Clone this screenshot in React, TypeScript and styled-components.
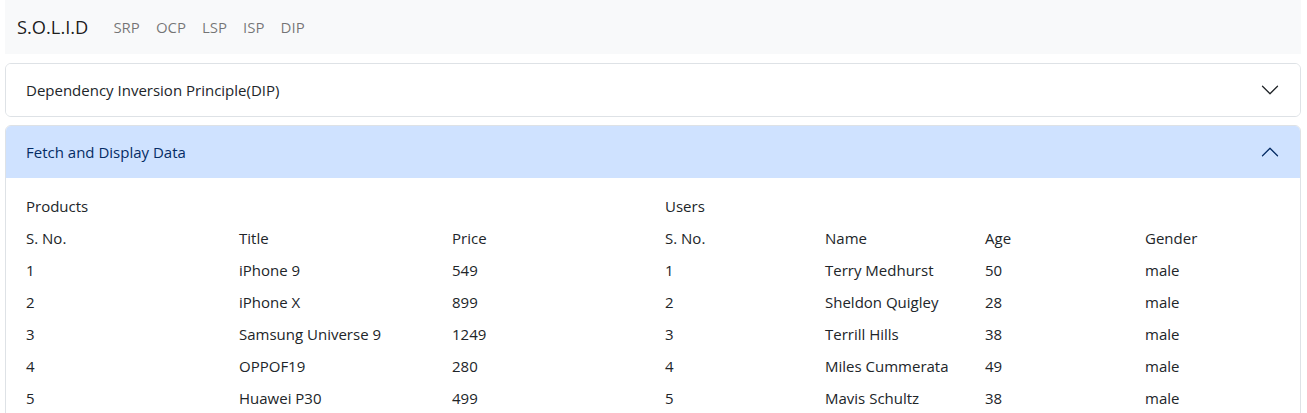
import React from "react";
import styled, { createGlobalStyle } from "styled-components";

const GlobalStyle = createGlobalStyle`
  * { box-sizing: border-box; }
  body {
    margin: 0;
    background: #ffffff;
    color: #212529;
    font-family: "Open Sans", "Noto Sans", "Liberation Sans", sans-serif;
    font-size: 15px;
    line-height: 24px;
  }
`;

const Page = styled.div`
  padding: 0 6px 0 5px;
  display: flex;
  flex-direction: column;
`;

const Navbar = styled.nav`
  height: 54px;
  background: #f8f9fa;
  display: flex;
  align-items: center;
  padding: 0 12px;
  margin-bottom: 9px;
`;

const Brand = styled.a`
  font-size: 18.3px;
  line-height: 30px;
  color: rgba(0, 0, 0, 0.9);
  margin-right: 17px;
  text-decoration: none;
`;

const NavList = styled.ul`
  display: flex;
  list-style: none;
  margin: 0;
  padding: 0;
`;

const NavLink = styled.a`
  display: block;
  padding: 0 8px;
  font-size: 15px;
  color: rgba(0, 0, 0, 0.55);
  text-decoration: none;
`;

const Item = styled.div`
  border: 1px solid #dee2e6;
  border-radius: 6px;
  overflow: hidden;
  margin-bottom: 8px;
`;

const Header = styled.button<{ $active?: boolean }>`
  width: 100%;
  display: flex;
  align-items: center;
  justify-content: space-between;
  padding: 14px 20px;
  border: 0;
  background: ${(p) => (p.$active ? "#cfe2ff" : "#ffffff")};
  color: ${(p) => (p.$active ? "#052c65" : "#212529")};
  font: inherit;
  text-align: left;
`;

const Chevron = styled.svg<{ $up?: boolean }>`
  width: 20px;
  height: 20px;
  flex-shrink: 0;
  transform: ${(p) => (p.$up ? "rotate(-180deg)" : "none")};
`;

const Body = styled.div`
  padding: 12px 20px 16px;
  display: grid;
  grid-template-columns: 1fr 1fr;
  column-gap: 24px;
`;

const Table = styled.div<{ $cols: string }>`
  display: grid;
  grid-template-columns: ${(p) => p.$cols};
`;

const Caption = styled.div`
  grid-column: 1 / -1;
  padding: 4px 0;
`;

const Cell = styled.div`
  padding: 4px 0;
  white-space: nowrap;
`;

function Icon({ up }: { up?: boolean }) {
  return (
    <Chevron $up={up} viewBox="0 0 16 16" fill={up ? "#052c65" : "#212529"}>
      <path
        fillRule="evenodd"
        d="M1.646 4.646a.5.5 0 0 1 .708 0L8 10.293l5.646-5.647a.5.5 0 0 1 .708.708l-6 6a.5.5 0 0 1-.708 0l-6-6a.5.5 0 0 1 0-.708z"
      />
    </Chevron>
  );
}

const products = [
  ["1", "iPhone 9", "549"],
  ["2", "iPhone X", "899"],
  ["3", "Samsung Universe 9", "1249"],
  ["4", "OPPOF19", "280"],
  ["5", "Huawei P30", "499"],
];

const users = [
  ["1", "Terry Medhurst", "50", "male"],
  ["2", "Sheldon Quigley", "28", "male"],
  ["3", "Terrill Hills", "38", "male"],
  ["4", "Miles Cummerata", "49", "male"],
  ["5", "Mavis Schultz", "38", "male"],
];

export default function App() {
  return (
    <Page>
      <GlobalStyle />
      <Navbar>
        <Brand>S.O.L.I.D</Brand>
        <NavList>
          {["SRP", "OCP", "LSP", "ISP", "DIP"].map((l) => (
            <li key={l}>
              <NavLink>{l}</NavLink>
            </li>
          ))}
        </NavList>
      </Navbar>
      <Item>
        <Header>
          <span>Dependency Inversion Principle(DIP)</span>
          <Icon />
        </Header>
      </Item>
      <Item>
        <Header $active>
          <span>Fetch and Display Data</span>
          <Icon up />
        </Header>
        <Body>
          <Table $cols="213px 213px 1fr">
            <Caption>Products</Caption>
            {["S. No.", "Title", "Price"].map((h) => (
              <Cell key={h}>{h}</Cell>
            ))}
            {products.map((r) =>
              r.map((c, i) => <Cell key={r[0] + "-" + i}>{c}</Cell>)
            )}
          </Table>
          <Table $cols="160px 160px 160px 1fr">
            <Caption>Users</Caption>
            {["S. No.", "Name", "Age", "Gender"].map((h) => (
              <Cell key={h}>{h}</Cell>
            ))}
            {users.map((r) =>
              r.map((c, i) => <Cell key={r[0] + "-" + i}>{c}</Cell>)
            )}
          </Table>
        </Body>
      </Item>
    </Page>
  );
}
